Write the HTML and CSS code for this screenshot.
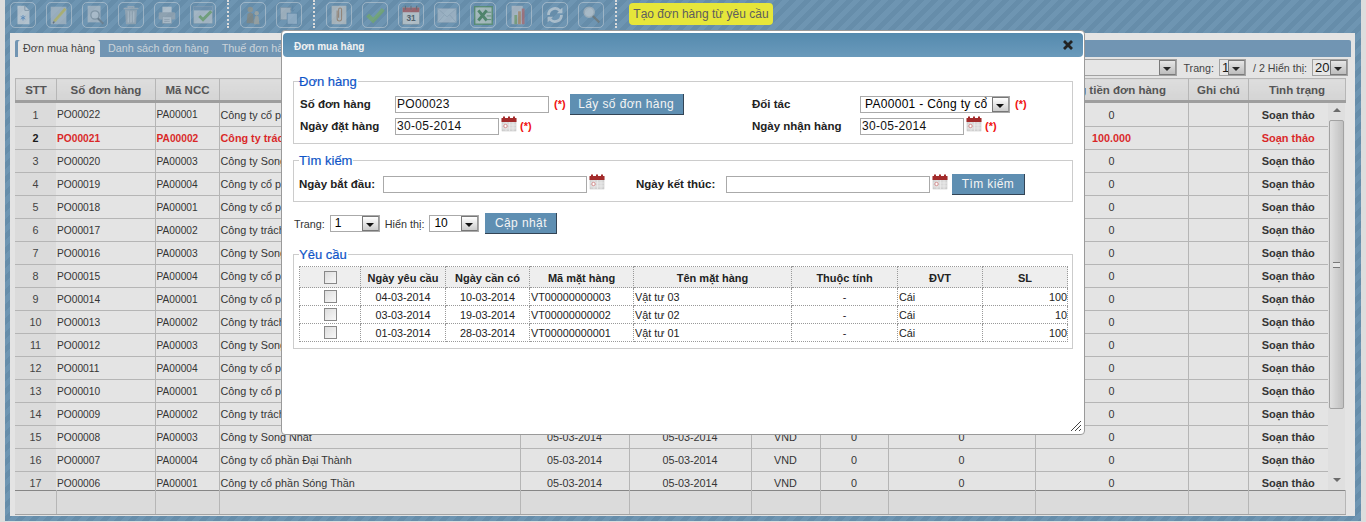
FILE: index.html
```html
<!DOCTYPE html>
<html lang="vi">
<head>
  <meta charset="UTF-8" />
  <meta name="viewport" content="width=device-width, initial-scale=1.0" />
  <title>Đơn mua hàng</title>
  <link rel="stylesheet" href="styles.css">
</head>
<body>

<svg class="defs" width="0" height="0">
  <symbol id="ico-cal" viewBox="0 0 16 16">
    <rect x="1" y="3" width="14" height="12" fill="#d8d8d8" stroke="#bbb" stroke-width="0.5"/>
    <rect x="0.5" y="2" width="15" height="4" fill="#a32b2b"/>
    <rect x="2" y="0.5" width="2" height="3" fill="#a32b2b"/>
    <rect x="7" y="0.5" width="2" height="3" fill="#a32b2b"/>
    <rect x="12" y="0.5" width="2" height="3" fill="#a32b2b"/>
    <path d="M1 9h14M1 12h14M5 6v9M8.5 6v9M12 6v9" stroke="#eee" stroke-width="0.7"/>
    <circle cx="4.5" cy="10" r="1.7" fill="#fff" stroke="#c77" stroke-width="0.8"/>
  </symbol>
</svg>

<div class="page">
  <div class="toolbar">
    <a class="tool"><svg viewBox="0 0 26 26"><path d="M7 3h8l5 5v15H7z" fill="#f2f5f8"/><path d="M15 3v5h5" fill="none" stroke="#8a9aa8"/><path d="M13 13v6M10.5 14.5l5 3M15.5 14.5l-5 3" stroke="#4a8ad0" stroke-width="1"/></svg></a>
    <a class="tool"><svg viewBox="0 0 26 26"><rect x="4" y="4" width="17" height="19" fill="#c3d0da"/><path d="M8 20L20 6" stroke="#e2d24a" stroke-width="3"/><path d="M6.5 22l1.5-2" stroke="#555" stroke-width="1.5"/></svg></a>
    <a class="tool"><svg viewBox="0 0 26 26"><rect x="5" y="3" width="14" height="18" fill="#c9d4dd"/><circle cx="13" cy="13" r="4.5" fill="#dfe7ed" stroke="#8d9ba6" stroke-width="1.4"/><path d="M16 16.5l6 6" stroke="#68747e" stroke-width="2.2"/></svg></a>
    <a class="tool"><svg viewBox="0 0 26 26"><path d="M5 6h16M10 6V4h6v2" fill="none" stroke="#b9c2c9" stroke-width="1.6"/><path d="M6.5 7h13l-1 16h-11z" fill="#adb7bf"/><path d="M10 9v12M13 9v12M16 9v12" stroke="#e2e7eb" stroke-width="1.2"/></svg></a>
    <a class="tool"><svg viewBox="0 0 26 26"><rect x="8" y="4" width="10" height="7" fill="#e6ebef"/><rect x="4" y="10" width="18" height="8" rx="1.5" fill="#aab5bd"/><rect x="8" y="15" width="10" height="7" fill="#dfe5ea" stroke="#98a4ad" stroke-width="0.6"/><path d="M10 18h6M10 20h6" stroke="#98a4ad" stroke-width="0.7"/></svg></a>
    <a class="tool"><svg viewBox="0 0 26 26"><rect x="3" y="4" width="20" height="18" fill="#d5dde3" stroke="#9fb0bd" stroke-width="0.6"/><rect x="3" y="4" width="20" height="4" fill="#6d95b8"/><path d="M9 14l4 4 9-9" fill="none" stroke="#6fae52" stroke-width="3.2"/></svg></a>
    <span class="tool-sep"></span>
    <a class="tool"><svg viewBox="0 0 26 26"><circle cx="10" cy="7" r="3" fill="#a59a83"/><path d="M6 22l1-10 3-2 3 2 1 10z" fill="#8c8672"/><circle cx="17" cy="11" r="2.4" fill="#c3bba8"/><path d="M14 23l1-8 2-2 2 2 1 8z" fill="#b7b09c"/></svg></a>
    <a class="tool"><svg viewBox="0 0 26 26"><rect x="4" y="5" width="11" height="13" fill="#c9d1d8" stroke="#8c9aa6" stroke-width="0.6"/><rect x="11" y="11" width="11" height="12" fill="#a9c8e2" stroke="#4f7fa6" stroke-width="0.8"/><path d="M17 3v6M15 7l2 2 2-2" fill="none" stroke="#4f7fa6"/></svg></a>
    <span class="tool-sep"></span>
    <a class="tool"><svg viewBox="0 0 26 26"><rect x="5" y="3" width="16" height="20" fill="#dfdcd6"/><path d="M11 8v9a2.4 2.4 0 0 0 4.8 0V7a1.6 1.6 0 0 0-3.2 0v9" fill="none" stroke="#b47a4a" stroke-width="1.1"/></svg></a>
    <a class="tool"><svg viewBox="0 0 26 26"><path d="M5 13l6 6 11-12" fill="none" stroke="#72b856" stroke-width="4.5"/></svg></a>
    <a class="tool"><svg viewBox="0 0 26 26"><rect x="4" y="5" width="18" height="18" fill="#f0efe9" stroke="#999" stroke-width="0.6"/><rect x="4" y="5" width="18" height="5" fill="#c0413d"/><path d="M7 3v4M13 3v4M19 3v4" stroke="#555" stroke-width="1.2"/><text x="13" y="20" class="cal-num">31</text></svg></a>
    <a class="tool"><svg viewBox="0 0 26 26"><rect x="3" y="6" width="20" height="15" fill="#c5d5e2" stroke="#9db1c1" stroke-width="0.7"/><path d="M3 6l10 9 10-9M3 21l7-8M23 21l-7-8" fill="none" stroke="#9db1c1" stroke-width="0.8"/></svg></a>
    <a class="tool"><svg viewBox="0 0 26 26"><rect x="4" y="4" width="19" height="19" fill="#d6e3d3" stroke="#3f8a46" stroke-width="1.5"/><path d="M8 8l9 11M17 8L8 19" stroke="#2f7d37" stroke-width="3.2"/><path d="M17 10h5M17 14h5M17 18h5" stroke="#3f8a46"/></svg></a>
    <a class="tool"><svg viewBox="0 0 26 26"><rect x="5" y="3" width="12" height="20" fill="#d5d8dc"/><rect x="8" y="13" width="3" height="10" fill="#7fae5a"/><rect x="12" y="9" width="3" height="14" fill="#d08a4a"/><rect x="16" y="6" width="3" height="17" fill="#c75a5a"/><rect x="20" y="12" width="2.5" height="11" fill="#5a89b8"/></svg></a>
    <a class="tool"><svg viewBox="0 0 26 26"><path d="M6 13a7 7 0 0 1 12-5l2 2M20 13a7 7 0 0 1-12 5l-2-2" fill="none" stroke="#e4edf3" stroke-width="3"/><path d="M21 5v6h-6zM5 21v-6h6z" fill="#e4edf3"/></svg></a>
    <a class="tool"><svg viewBox="0 0 26 26"><circle cx="11" cy="10" r="5.5" fill="#dfe6ea" stroke="#c3c9cc" stroke-width="1.6"/><path d="M15 14l7 7" stroke="#6d6a60" stroke-width="2.4"/></svg></a>
    <span class="tool-sep"></span>
    <button class="tool-yellow">Tạo đơn hàng từ yêu cầu</button>
  </div>

  <div class="panel">
    <div class="tabs">
      <span class="tab active">Đơn mua hàng</span>
      <span class="tab">Danh sách đơn hàng</span>
      <span class="tab">Thuế đơn hàng</span>
    </div>

    <div class="filter-row">
      <div class="select sel-filter"><span class="val"></span><span class="arrow"></span></div>
      <span class="pager-label">Trang:</span>
      <div class="select sel-page"><span class="val">1</span><span class="arrow"></span></div>
      <span class="pager-label">/ 2 Hiển thị:</span>
      <div class="select sel-size"><span class="val">20</span><span class="arrow"></span></div>
    </div>

    <table class="grid grid-head">
      <colgroup><col class="c1"><col class="c2"><col class="c3"><col class="c4"><col class="c5"><col class="c6"><col class="c7"><col class="c8"><col class="c9"><col class="c10"><col class="c11"><col class="c12h"></colgroup>
      <tr><th>STT</th><th>Số đơn hàng</th><th>Mã NCC</th><th></th><th></th><th></th><th></th><th></th><th></th><th>Tổng tiền đơn hàng</th><th>Ghi chú</th><th>Tình trạng</th></tr>
    </table>

    <div class="grid-wrap">
      <div class="grid-scroll">
        <table class="grid grid-body">
          <colgroup><col class="c1"><col class="c2"><col class="c3"><col class="c4"><col class="c5"><col class="c6"><col class="c7"><col class="c8"><col class="c9"><col class="c10"><col class="c11"><col class="c12"></colgroup>
          <tr><td class="stt">1</td><td>PO00022</td><td>PA00001</td><td>Công ty cổ phần</td><td></td><td></td><td></td><td></td><td></td><td class="mid">0</td><td></td><td class="state">Soạn thảo</td></tr>
          <tr class="hot"><td class="stt">2</td><td>PO00021</td><td>PA00002</td><td>Công ty trách</td><td></td><td></td><td></td><td></td><td></td><td class="mid">100.000</td><td></td><td class="state">Soạn thảo</td></tr>
          <tr><td class="stt">3</td><td>PO00020</td><td>PA00003</td><td>Công ty Song</td><td></td><td></td><td></td><td></td><td></td><td class="mid">0</td><td></td><td class="state">Soạn thảo</td></tr>
          <tr><td class="stt">4</td><td>PO00019</td><td>PA00004</td><td>Công ty cổ phần</td><td></td><td></td><td></td><td></td><td></td><td class="mid">0</td><td></td><td class="state">Soạn thảo</td></tr>
          <tr><td class="stt">5</td><td>PO00018</td><td>PA00001</td><td>Công ty cổ phần</td><td></td><td></td><td></td><td></td><td></td><td class="mid">0</td><td></td><td class="state">Soạn thảo</td></tr>
          <tr><td class="stt">6</td><td>PO00017</td><td>PA00002</td><td>Công ty trách</td><td></td><td></td><td></td><td></td><td></td><td class="mid">0</td><td></td><td class="state">Soạn thảo</td></tr>
          <tr><td class="stt">7</td><td>PO00016</td><td>PA00003</td><td>Công ty Song</td><td></td><td></td><td></td><td></td><td></td><td class="mid">0</td><td></td><td class="state">Soạn thảo</td></tr>
          <tr><td class="stt">8</td><td>PO00015</td><td>PA00004</td><td>Công ty cổ phần</td><td></td><td></td><td></td><td></td><td></td><td class="mid">0</td><td></td><td class="state">Soạn thảo</td></tr>
          <tr><td class="stt">9</td><td>PO00014</td><td>PA00001</td><td>Công ty cổ phần</td><td></td><td></td><td></td><td></td><td></td><td class="mid">0</td><td></td><td class="state">Soạn thảo</td></tr>
          <tr><td class="stt">10</td><td>PO00013</td><td>PA00002</td><td>Công ty trách</td><td></td><td></td><td></td><td></td><td></td><td class="mid">0</td><td></td><td class="state">Soạn thảo</td></tr>
          <tr><td class="stt">11</td><td>PO00012</td><td>PA00003</td><td>Công ty Song</td><td></td><td></td><td></td><td></td><td></td><td class="mid">0</td><td></td><td class="state">Soạn thảo</td></tr>
          <tr><td class="stt">12</td><td>PO00011</td><td>PA00004</td><td>Công ty cổ phần</td><td></td><td></td><td></td><td></td><td></td><td class="mid">0</td><td></td><td class="state">Soạn thảo</td></tr>
          <tr><td class="stt">13</td><td>PO00010</td><td>PA00001</td><td>Công ty cổ phần</td><td></td><td></td><td></td><td></td><td></td><td class="mid">0</td><td></td><td class="state">Soạn thảo</td></tr>
          <tr><td class="stt">14</td><td>PO00009</td><td>PA00002</td><td>Công ty trách</td><td></td><td></td><td></td><td></td><td></td><td class="mid">0</td><td></td><td class="state">Soạn thảo</td></tr>
          <tr><td class="stt">15</td><td>PO00008</td><td>PA00003</td><td>Công ty Song Nhất</td><td class="mid">05-03-2014</td><td class="mid">05-03-2014</td><td class="mid">VND</td><td class="mid">0</td><td class="mid">0</td><td class="mid">0</td><td></td><td class="state">Soạn thảo</td></tr>
          <tr><td class="stt">16</td><td>PO00007</td><td>PA00004</td><td>Công ty cổ phần Đại Thành</td><td class="mid">05-03-2014</td><td class="mid">05-03-2014</td><td class="mid">VND</td><td class="mid">0</td><td class="mid">0</td><td class="mid">0</td><td></td><td class="state">Soạn thảo</td></tr>
          <tr><td class="stt">17</td><td>PO00006</td><td>PA00001</td><td>Công ty cổ phần Sóng Thần</td><td class="mid">05-03-2014</td><td class="mid">05-03-2014</td><td class="mid">VND</td><td class="mid">0</td><td class="mid">0</td><td class="mid">0</td><td></td><td class="state">Soạn thảo</td></tr>
        </table>
      </div>
      <div class="scrollbar">
        <span class="sb-up"></span>
        <div class="sb-thumb"><span class="sb-grip"></span></div>
        <span class="sb-down"></span>
      </div>
    </div>

    <table class="grid grid-foot">
      <colgroup><col class="c1"><col class="c2"><col class="c3"><col class="c4"><col class="c5"><col class="c6"><col class="c7"><col class="c8"><col class="c9"><col class="c10"><col class="c11"><col class="c12h"></colgroup>
      <tr><td></td><td></td><td></td><td></td><td></td><td></td><td></td><td></td><td></td><td></td><td></td><td></td></tr>
    </table>
  </div>
</div>

<div class="overlay"></div>

<div class="modal">
  <div class="modal-head">
    <span class="modal-title">Đơn mua hàng</span>
    <svg class="modal-close" viewBox="0 0 12 12"><path d="M2 2l8 8M10 2l-8 8" stroke="#222" stroke-width="2.8"/></svg>
  </div>

  <div class="modal-body">
    <fieldset class="box box-order">
      <legend>Đơn hàng</legend>
      <div class="form-row">
        <div class="form-left">
          <label class="lbl lbl-order">Số đơn hàng</label>
          <input class="txt w-154" type="text" value="PO00023">
          <span class="req">(*)</span>
          <button class="btn btn-get">Lấy số đơn hàng</button>
        </div>
        <div class="form-right">
          <label class="lbl lbl-partner">Đối tác</label>
          <div class="select sel-partner"><span class="val">PA00001 - Công ty cổ</span><span class="arrow"></span></div>
          <span class="req">(*)</span>
        </div>
      </div>
      <div class="form-row">
        <div class="form-left">
          <label class="lbl lbl-order">Ngày đặt hàng</label>
          <input class="txt w-104" type="text" value="30-05-2014">
          <svg class="cal"><use href="#ico-cal"/></svg>
          <span class="req">(*)</span>
        </div>
        <div class="form-right">
          <label class="lbl lbl-partner">Ngày nhận hàng</label>
          <input class="txt w-104" type="text" value="30-05-2014">
          <svg class="cal"><use href="#ico-cal"/></svg>
          <span class="req">(*)</span>
        </div>
      </div>
    </fieldset>

    <fieldset class="box box-search">
      <legend>Tìm kiếm</legend>
      <div class="search-row">
        <label class="lbl lbl-from">Ngày bắt đầu:</label>
        <input class="txt w-204" type="text">
        <svg class="cal"><use href="#ico-cal"/></svg>
        <label class="lbl lbl-to">Ngày kết thúc:</label>
        <input class="txt w-204" type="text">
        <svg class="cal"><use href="#ico-cal"/></svg>
        <button class="btn btn-search">Tìm kiếm</button>
      </div>
    </fieldset>

    <div class="pager">
      <span class="pager-text">Trang:</span>
      <div class="select sel-50"><span class="val">1</span><span class="arrow"></span></div>
      <span class="pager-text">Hiển thị:</span>
      <div class="select sel-50"><span class="val">10</span><span class="arrow"></span></div>
      <button class="btn btn-update">Cập nhật</button>
    </div>

    <fieldset class="box box-req">
      <legend>Yêu cầu</legend>
      <table class="req-table">
        <colgroup><col class="r1"><col class="r2"><col class="r3"><col class="r4"><col class="r5"><col class="r6"><col class="r7"><col class="r8"></colgroup>
        <tr><th><span class="chk"></span></th><th>Ngày yêu cầu</th><th>Ngày cần có</th><th>Mã mặt hàng</th><th>Tên mặt hàng</th><th>Thuộc tính</th><th>ĐVT</th><th>SL</th></tr>
        <tr><td class="mid"><span class="chk"></span></td><td class="mid">04-03-2014</td><td class="mid">10-03-2014</td><td>VT00000000003</td><td>Vật tư 03</td><td class="mid">-</td><td>Cái</td><td class="num">100</td></tr>
        <tr><td class="mid"><span class="chk"></span></td><td class="mid">03-03-2014</td><td class="mid">19-03-2014</td><td>VT00000000002</td><td>Vật tư 02</td><td class="mid">-</td><td>Cái</td><td class="num">10</td></tr>
        <tr><td class="mid"><span class="chk"></span></td><td class="mid">01-03-2014</td><td class="mid">28-03-2014</td><td>VT00000000001</td><td>Vật tư 01</td><td class="mid">-</td><td>Cái</td><td class="num">100</td></tr>
      </table>
    </fieldset>
  </div>

  <svg class="grip" viewBox="0 0 12 12"><path d="M1 11L11 1M5 11l6-6M9 11l2-2" stroke="#444" stroke-width="1"/></svg>
</div>

</body>
</html>
```

FILE: styles.css
```css
* {
  box-sizing: border-box;
}

html, body {
  height: 522px;
}

body {
  margin: 0;
  overflow: hidden;
  background: #f4f4f4;
  font-family: "Liberation Sans", Arial, sans-serif;
  font-size: 11px;
  color: #000;
}

.defs {
  display: block;
  height: 0;
}

.page {
  height: 521px;
  margin: 0 5px;
  background: repeating-linear-gradient(135deg, #6a9abf 0, #6a9abf 5px, #5f90b5 5px, #5f90b5 10px);
}

.overlay {
  position: fixed;
  inset: 0;
  background: rgba(128, 128, 128, 0.2);
}

/* toolbar */
.toolbar {
  display: flex;
  align-items: flex-start;
  gap: 10px;
  height: 33px;
  padding: 2px 0 0 5px;
}

.tool {
  display: block;
  width: 26px;
  height: 26px;
  border: 1px solid rgba(255, 255, 255, 0.4);
  border-radius: 5px;
}

.tool svg {
  display: block;
  width: 24px;
  height: 24px;
  opacity: 0.62;
}

.cal-num {
  font-family: "Liberation Sans", Arial, sans-serif;
  font-size: 9px;
  font-weight: bold;
  text-anchor: middle;
  fill: #333;
}

.tool-sep {
  width: 0;
  height: 28px;
  margin: -2px 1px 0 1px;
  border-left: 2px dotted #f2f2f2;
}

.tool-yellow {
  height: 22px;
  width: 144px;
  margin: 1px 0 0 1px;
  padding: 0;
  border: none;
  border-radius: 4px;
  background: #ffff28;
  font-family: inherit;
  font-size: 12px;
  color: #555;
}

/* main panel */
.panel {
  height: 483px;
  margin: 0 6px 0 5px;
  padding: 7px 4px 0 5px;
  background: #fdfdfd;
}

.tabs {
  display: flex;
  height: 17px;
  padding-left: 3px;
  background: #6d9ac0;
  overflow: hidden;
  border-radius: 2px 2px 0 0;
  font-size: 10.8px;
}

.tab {
  padding: 2px 5px 0;
  margin-right: 3px;
  color: #dde6ee;
}

.tab.active {
  background: #fdfdfd;
  color: #333;
  border-radius: 3px 3px 0 0;
}

.filter-row {
  display: flex;
  align-items: center;
  justify-content: flex-end;
  gap: 5px;
  height: 21px;
  padding-right: 3px;
  font-size: 10.7px;
}

.pager-label {
  color: #333;
}

/* fake select with the old arrow button */
.select {
  display: flex;
  height: 17px;
  border: 1px solid #aaa;
  background: #fff;
}

.select .val {
  flex: 1;
  padding-left: 4px;
  line-height: 15px;
  overflow: hidden;
  white-space: nowrap;
}

.select .arrow {
  position: relative;
  flex: none;
  width: 17px;
  border: 1px solid #777;
  border-right-color: #999;
  background: linear-gradient(#fff, #ccc);
}

.select .arrow::after {
  content: "";
  position: absolute;
  left: 3px;
  top: 6px;
  border: 4px solid transparent;
  border-top: 4px solid #111;
  border-bottom: 0;
}

.sel-filter { width: 300px; margin-right: 1px; }
.sel-page { width: 27px; margin-right: 2px; }
.sel-size { width: 36px; }
.sel-page .val, .sel-size .val { padding-left: 2px; font-size: 13px; }

/* grid */
.grid {
  border-collapse: collapse;
  table-layout: fixed;
}

.grid-head, .grid-foot {
  width: 1330px;
}

.grid-body {
  width: 1313px;
}

.c1 { width: 41px; }
.c2 { width: 99px; }
.c3 { width: 64px; }
.c4 { width: 301px; }
.c5 { width: 109px; }
.c6 { width: 122px; }
.c7 { width: 69px; }
.c8 { width: 68px; }
.c9 { width: 147px; }
.c10 { width: 153px; }
.c11 { width: 60px; }
.c12 { width: 80px; }
.c12h { width: 97px; }

.grid-head tr {
  height: 23px;
}

.grid-head th {
  border: 1px solid #c4c4c4;
  border-bottom: 3px solid #a5a5a5;
  background: linear-gradient(#f5f5f5, #e9e9e9);
  font-weight: bold;
  font-size: 11.5px;
  color: #4a4a4a;
  padding: 0;
}

.grid-wrap {
  display: flex;
  height: 387px;
}

.grid-scroll {
  width: 1313px;
  height: 387px;
  overflow: hidden;
}

.grid-body tr {
  height: 23px;
}

.grid-body td {
  border-bottom: 1px solid #c2c2c2;
  border-right: 1px solid #c2c2c2;
  padding: 1px 1px 0;
  white-space: nowrap;
  overflow: hidden;
  font-size: 10.8px;
  color: #222;
}

.grid-body td:nth-child(2),
.grid-body td:nth-child(3) {
  font-size: 10.2px;
}

.grid-body .stt {
  background: #f2f2f2;
  text-align: center;
  color: #333;
  border-right: none;
}

.mid {
  text-align: center;
}

.grid-body .state {
  text-align: center;
  font-weight: bold;
  font-size: 11px;
  border-right: none;
}

.grid-body .hot td {
  color: #f01010;
  font-weight: bold;
}

.grid-body .hot .stt {
  color: #000;
}

.scrollbar {
  position: relative;
  display: flex;
  flex-direction: column;
  align-items: center;
  width: 17px;
  height: 387px;
  background: #f7f7f7;
}

.sb-up, .sb-down {
  flex: none;
  height: 17px;
  margin-top: 5px;
  border: 4px solid transparent;
  border-bottom: 4px solid #666;
  border-top: 0;
  height: 0;
}

.sb-thumb {
  display: flex;
  align-items: center;
  justify-content: center;
  width: 15px;
  height: 289px;
  margin: 8px 0 0;
  border: 1px solid #aaa;
  border-radius: 2px;
  background: linear-gradient(90deg, #f8f8f8, #d0d0d0);
}

.sb-grip {
  width: 7px;
  height: 6px;
  border-top: 1px solid #777;
  border-bottom: 1px solid #777;
  background: linear-gradient(#fff 40%, #777 40%, #777 60%, #fff 60%);
}

.sb-down {
  margin-top: 69px;
  border-top: 4px solid #666;
  border-bottom: 0;
}

.grid-foot tr {
  height: 24px;
}

.grid-foot td {
  border-top: 1px solid #888;
  border-bottom: 1px solid #aaa;
  border-right: 1px solid #c4c4c4;
  background: #f2f2f2;
}

/* dialog */
.modal {
  position: absolute;
  left: 281px;
  top: 30px;
  width: 804px;
  height: 405px;
  border: 1px solid #9a9a9a;
  border-radius: 4px;
  background: #fff;
}

.modal-head {
  display: flex;
  align-items: center;
  justify-content: space-between;
  height: 24px;
  margin: 2px 1px 0;
  padding: 0 9px 0 11px;
  border-radius: 4px;
  background: linear-gradient(#558aae, #6a9abb);
}

.modal-title {
  margin-top: 3px;
  font-size: 10px;
  font-weight: bold;
  color: #f2f2f2;
}

.modal-close {
  width: 12px;
  height: 12px;
}

.modal-body {
  padding: 17px 11px 0;
}

.box {
  margin: 0;
  padding: 0 5px;
  min-width: 0;
  border: 1px solid #ccc;
}

.box legend {
  margin-left: 0;
  padding: 0 1px 0 0;
  font-size: 13px;
  color: #0f55c8;
  -webkit-text-stroke: 0.2px #0f55c8;
}

.box-order {
  height: 70px;
  padding-top: 4px;
}

.box-search {
  height: 49px;
  margin-top: 9px;
  padding-top: 1px;
}

.box-req {
  height: 102px;
  margin-top: 13px;
}

.form-row {
  display: flex;
  height: 22px;
  align-items: center;
}

.form-left, .form-right {
  display: flex;
  align-items: center;
}

.form-left {
  width: 453px;
}

.lbl {
  font-weight: bold;
  font-size: 11.5px;
  color: #222;
}

.lbl-order { width: 96px; padding-left: 1px; }
.lbl-partner { width: 108px; }
.lbl-from { width: 84px; }
.lbl-to { width: 90px; margin-left: 31px; }

.txt {
  height: 17px;
  padding: 0 1px;
  border: 1px solid #aaa;
  font-family: inherit;
  font-size: 12px;
  color: #111;
  letter-spacing: 0.3px;
}

.w-104 { width: 104px; }
.w-154 { width: 154px; }
.w-204 { width: 204px; }

.cal {
  flex: none;
  width: 16px;
  height: 16px;
  margin: -4px 0 0 2px;
}

.req {
  margin-left: 5px;
  font-weight: bold;
  color: #f01010;
}

.cal + .req {
  margin-left: 3px;
}

.btn {
  border: none;
  border-right: 1px solid #345;
  border-bottom: 1px solid #345;
  background: #5f8fb2;
  color: #f4f4f4;
  font-family: inherit;
  font-size: 12px;
  letter-spacing: 0.4px;
  padding: 0;
}

.btn-get {
  width: 114px;
  height: 21px;
  margin-left: 4px;
}

.sel-partner {
  width: 150px;
  font-size: 12px;
}

.sel-partner .val {
  letter-spacing: 0.3px;
}

.search-row {
  display: flex;
  align-items: center;
  height: 30px;
}

.btn-search {
  width: 73px;
  height: 21px;
  margin-left: 4px;
}

.pager {
  display: flex;
  align-items: center;
  height: 21px;
  margin-top: 11px;
  padding-left: 1px;
}

.pager-text {
  font-size: 10.8px;
  color: #333;
}

.sel-50 {
  width: 50px;
  margin: 0 5px;
  font-size: 12px;
}

.btn-update {
  width: 72px;
  height: 21px;
  margin-left: 1px;
}

.req-table {
  width: 768px;
  margin-top: 4px;
  border-collapse: collapse;
  table-layout: fixed;
}

.r1 { width: 61px; }
.r2 { width: 85px; }
.r3 { width: 84px; }
.r4 { width: 104px; }
.r5 { width: 158px; }
.r6 { width: 106px; }
.r7 { width: 85px; }
.r8 { width: 85px; }

.req-table th, .req-table td {
  border: 1px dotted #999;
  padding: 0 1px;
  font-size: 10.8px;
  color: #222;
  white-space: nowrap;
}

.req-table th {
  height: 21px;
  padding-top: 1px;
  background: #eee;
  font-size: 11px;
}

.req-table td {
  height: 18px;
}

.req-table .num {
  text-align: right;
  padding-right: 0;
}

.chk {
  display: inline-block;
  width: 13px;
  height: 13px;
  border: 1px solid #888;
  background: linear-gradient(135deg, #ddd, #f8f8f8);
  vertical-align: middle;
}

.grip {
  position: absolute;
  right: 2px;
  bottom: 2px;
  width: 12px;
  height: 12px;
}
```
